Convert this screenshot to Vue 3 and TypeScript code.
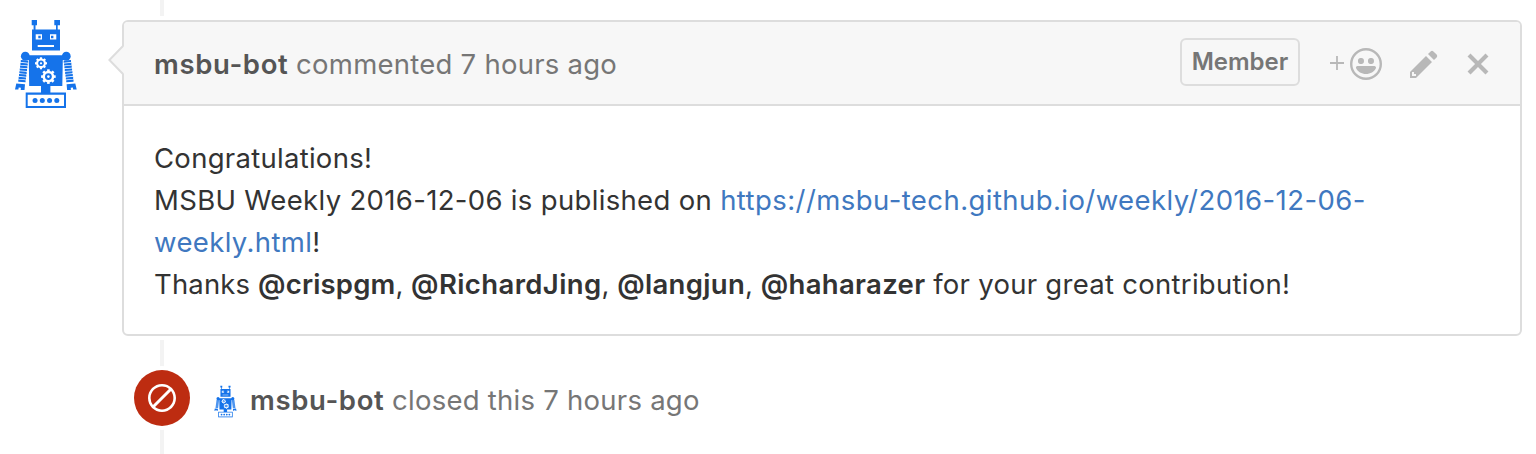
<script setup lang="ts">
interface Mention { name: string; fit: string }

const mentions: Mention[] = [
  { name: '@crispgm', fit: 'fit-a' },
  { name: '@RichardJing', fit: 'fit-d' },
  { name: '@langjun', fit: 'fit-b' },
  { name: '@haharazer', fit: 'fit-c' },
]
const rungs: number[] = [0, 1, 2, 3, 4, 5, 6, 7]
const teeth: number[] = [0, 45, 90, 135]
</script>

<template>
  <main class="timeline">
    <svg class="defs" aria-hidden="true">
      <symbol id="robot" viewBox="14 19 64 90">
        <path d="M31.7 20H37v5.2h-1.5v4.3H60v21H32V29.5h1.6v-4.3h-1.9zM54.3 20H60v5.2h-2.3v4.3H56v-4.3h-1.7z" />
        <circle cx="25.3" cy="56.2" r="4.4" />
        <circle cx="66.3" cy="56.2" r="4.4" />
        <path d="M24 55.2H67.6V60H62.8L62.3 86H50.4v7H41v-7H29.2L28.8 60H24z" />
        <path d="M25.7 92.6H66V108H25.7z" />
        <g class="paper">
          <path d="M35.7 34.2H42v5.4h-6.3zM50 34.2h6.3v5.4H50zM37.7 45H54v1.9H37.7zM27.7 94.7H64V106H27.7z" />
          <circle cx="41" cy="63.3" r="4.9" />
          <circle cx="48.4" cy="76.6" r="5.9" />
          <path v-for="a in teeth" :key="a" d="M39.9 57.3h2.2v12h-2.2z" :transform="`rotate(${a} 41 63.3)`" />
          <path v-for="a in teeth" :key="`b${a}`" d="M47.1 69.3h2.6v14.6h-2.6z" :transform="`rotate(${a} 48.4 76.6)`" />
        </g>
        <path d="M38.3 35.7h2.4v2.6h-2.4zM51 35.7h2.4v2.6H51z" />
        <circle cx="41" cy="63.3" r="2.8" />
        <circle cx="48.4" cy="76.6" r="3.4" />
        <circle class="paper" cx="41" cy="63.3" r="1.1" />
        <circle class="paper" cx="48.4" cy="76.6" r="1.3" />
        <path v-for="n in rungs" :key="n" d="M20.8 60l7.3.6v2.1l-7.3-.6z" :transform="`translate(${-n * 0.36} ${n * 2.8})`" />
        <path v-for="n in rungs" :key="`r${n}`" d="M71 60l-7.3.6v2.1l7.3-.6z" :transform="`translate(${n * 0.36} ${n * 2.8})`" />
        <path d="M16.3 83.5l8.7.8-.5 5.7h-3.8l.2-2.3-2.2-.2-.3 1.9H15zM75.3 83.5l-8.7.8.5 5.7h3.8l-.2-2.3 2.2-.2.3 1.9h3.5z" />
        <circle v-for="n in 4" :key="`d${n}`" :cx="27.8 + n * 7.25" cy="100.4" r="2.5" />
      </symbol>
    </svg>

    <section class="comment-row">
      <svg class="avatar"><use href="#robot" /></svg>
      <article class="comment">
        <svg class="caret" viewBox="0 0 16 30"><path class="fill" d="M16 1L2 15l14 14z" /><path class="edge" d="M15 1L1.4 15 15 29" /></svg>
        <header class="head">
          <p class="line"><strong class="author">msbu-bot</strong> <span class="meta">commented 7 hours ago</span></p>
          <span class="badge">Member</span>
          <span class="react">
            <svg class="plus" viewBox="0 0 14 14"><path d="M0 7h14M7 0v14" /></svg>
            <svg class="smiley" viewBox="0 0 16 16">
              <circle cx="8" cy="8" r="7.4" />
              <path d="M4 6.8v-.59c0-.66.53-1.19 1.2-1.19h.59c.66 0 1.19.53 1.19 1.19v.59c0 .67-.53 1.19-1.19 1.19H5.2C4.53 8 4 7.47 4 6.8zm5 0v-.59c0-.66.53-1.19 1.2-1.19h.59c.66 0 1.19.53 1.19 1.19v.59c0 .67-.53 1.19-1.19 1.19h-.59C9.53 8 9 7.47 9 6.8zm4 3.2c-.72 1.88-2.91 3-5 3s-4.28-1.13-5-3c-.14-.39.23-1 .66-1h8.59c.41 0 .89.61.75 1z" />
            </svg>
          </span>
          <svg class="pencil" viewBox="0 0 14 16"><path d="M0 12v3h3l8-8-3-3-8 8zm3 2H1v-2h1v1h1v1zm10.3-9.3L12 6 9 3l1.3-1.3a.996.996 0 0 1 1.41 0l1.59 1.59c.39.39.39 1.02 0 1.41z" /></svg>
          <svg class="cross" viewBox="0 0 12 16"><path d="M7.48 8l3.75 3.75-1.48 1.48L6 9.48l-3.75 3.75-1.48-1.48L4.52 8 .77 4.25l1.48-1.48L6 6.52l3.75-3.75 1.48 1.48z" /></svg>
        </header>
        <div class="body">
          <p class="fit-b">Congratulations!</p>
          <p><span class="fit-c">MSBU Weekly 2016-12-06 is published on </span><a class="fit-e">https://msbu-tech.github.io/weekly/2016-12-06-</a></p>
          <p><a class="fit-d">weekly.html</a>!</p>
          <p><span class="fit-a">Thanks </span><template v-for="(m, i) in mentions" :key="m.name"><strong :class="m.fit">{{ m.name }}</strong>{{ i < mentions.length - 1 ? ', ' : ' ' }}</template><span class="fit-b">for your great contribution!</span></p>
        </div>
      </article>
    </section>

    <section class="event">
      <span class="closed"><svg viewBox="0 0 14 16"><path d="M7 1C3.14 1 0 4.14 0 8s3.14 7 7 7 7-3.14 7-7-3.14-7-7-7zm0 1.3c1.3 0 2.5.44 3.47 1.17l-8 8A5.755 5.755 0 0 1 1.3 8c0-3.14 2.56-5.7 5.7-5.7zm0 11.41c-1.3 0-2.5-.44-3.47-1.17l8-8c.73.97 1.17 2.17 1.17 3.47 0 3.14-2.56 5.7-5.7 5.7z" /></svg></span>
      <svg class="mini"><use href="#robot" /></svg>
      <p class="line"><strong class="author">msbu-bot</strong> <span class="meta">closed this 7 hours ago</span></p>
    </section>
  </main>
</template>

<style scoped>
.timeline { position: relative; box-sizing: border-box; height: 454px; padding-top: 20px; overflow: hidden; background: #fff; color: #333; font-family: Inter, "Liberation Sans", sans-serif; font-size: 27.5px; line-height: 42px; }
.timeline::before { content: ""; position: absolute; left: 160px; top: 0; width: 4px; height: 454px; background: #f3f3f3; }
p { margin: 0; white-space: pre; }
strong { font-weight: 600; }
.defs { position: absolute; width: 0; height: 0; }
.comment-row { position: relative; display: flex; align-items: flex-start; }
.avatar { width: 64px; height: 90px; margin: -1px 44px 0 14px; fill: #1573ea; }
.paper { fill: #fff; }
.comment { position: relative; box-sizing: border-box; width: 1400px; height: 316px; border: 2px solid #ddd; border-radius: 6px; background: #fff; box-shadow: 0 0 0 4px #fff; }
.caret { position: absolute; left: -16px; top: 23px; width: 16px; height: 30px; }
.caret .fill { fill: #f7f7f7; }
.caret .edge { fill: none; stroke: #ddd; stroke-width: 2; }
.head { display: flex; align-items: center; box-sizing: border-box; height: 84px; padding: 2px 30px 0; border-bottom: 2px solid #ddd; border-radius: 4px 4px 0 0; background: #f7f7f7; fill: #b8b8b8; }
.head .line { flex: 1; }
.author { color: #555; letter-spacing: 0.64px; }
.meta { color: #767676; letter-spacing: 0.25px; }
.fit-a { letter-spacing: 0.15px; }
.fit-b { letter-spacing: 0.28px; }
.fit-c { letter-spacing: 0.33px; }
.fit-d { letter-spacing: 0.38px; }
.fit-e { letter-spacing: 0.43px; }
.badge { box-sizing: border-box; width: 120px; height: 48px; margin: -4px 30px 0 0; border: 2px solid #ddd; border-radius: 6px; color: #767676; font-size: 24px; font-weight: 600; line-height: 43px; text-align: center; }
.react { display: flex; align-items: center; gap: 6px; margin-right: 28px; }
.plus { width: 14px; height: 14px; margin-top: -2px; fill: none; stroke: #b8b8b8; stroke-width: 1.8; }
.smiley { width: 32px; height: 32px; }
.smiley circle { fill: none; stroke: #b8b8b8; stroke-width: 1.2; }
.pencil { width: 28px; height: 32px; margin-right: 28px; }
.cross { width: 24px; height: 32px; }
.body { padding: 31px 30px; }
a { color: #4078c0; }
.event { position: relative; display: flex; align-items: center; height: 56px; margin-top: 34px; padding-left: 134px; }
.event .line { padding-top: 3px; }
.closed { display: flex; align-items: center; justify-content: center; width: 56px; height: 56px; border-radius: 50%; background: #bd2c11; box-shadow: 0 0 0 4px #fff; }
.closed svg { width: 28px; height: 32px; fill: #fff; }
.mini { width: 23px; height: 33px; margin: 7px 13px 0 24px; fill: #1573ea; }
</style>
